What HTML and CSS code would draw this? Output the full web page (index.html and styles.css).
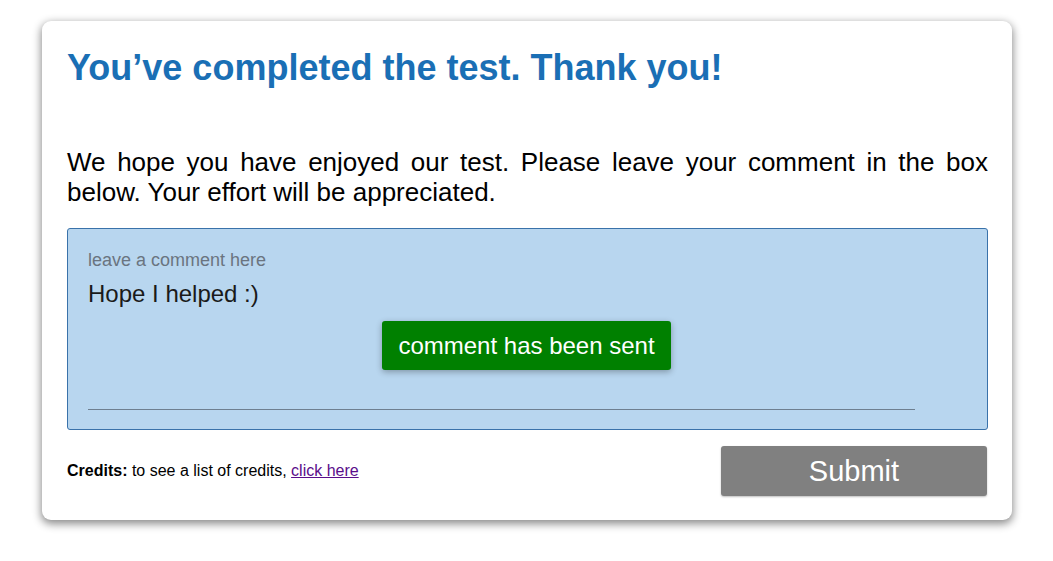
FILE: index.html
```html
<!DOCTYPE html>
<html>
<head>
<meta charset="utf-8">
<link rel="stylesheet" href="styles.css">
</head>
<body>
<div class="page">
  <div class="card">
    <h1 class="title">You’ve completed the test. Thank you!</h1>
    <p class="intro">We hope you have enjoyed our test. Please leave your comment in the box below. Your effort will be appreciated.</p>
    <div class="comment-box">
      <div class="label">leave a comment here</div>
      <div class="comment-text">Hope I helped :)</div>
      <div class="sent-row"><span class="sent">comment has been sent</span></div>
      <div class="rule"></div>
    </div>
    <div class="footer">
      <div class="credits"><b>Credits:</b> to see a list of credits, <a href="#" class="link">click here</a></div>
      <button class="submit">Submit</button>
    </div>
  </div>
</div>
</body>
</html>
```
FILE: styles.css
```css
html, body {
  margin: 0;
  padding: 0;
  background: #fff;
  font-family: "Liberation Sans", Arial, sans-serif;
}
.page {
  padding: 21px 41px 30px 42px;
}
.card {
  width: 970px;
  height: 499px;
  box-sizing: border-box;
  background: #fff;
  border-radius: 9px;
  box-shadow: 0 3px 8px 1px rgba(0,0,0,0.45);
  padding: 24px 24px 0 25px;
  display: flex;
  flex-direction: column;
}
.title {
  margin: 0;
  color: #1a6fb5;
  font-size: 36px;
  font-weight: bold;
  line-height: 46px;
}
.intro {
  margin: 56px 0 0 0;
  font-size: 26px;
  line-height: 30px;
  text-align: justify;
  color: #000;
}
.comment-box {
  margin-top: 21px;
  height: 202px;
  box-sizing: border-box;
  background: #b8d6ef;
  border: 1px solid #3a72aa;
  border-radius: 3px;
  padding: 20px 72px 0 20px;
  display: flex;
  flex-direction: column;
}
.label {
  color: #6a7480;
  font-size: 18px;
  line-height: 22px;
}
.comment-text {
  margin-top: 10px;
  color: #1a1a1a;
  font-size: 24px;
  line-height: 26px;
}
.sent-row {
  margin-top: 14px;
  display: flex;
  justify-content: center;
  padding-left: 50px;
}
.sent {
  background: #008000;
  color: #fff;
  font-size: 24px;
  line-height: 49px;
  padding: 0 16px;
  border-radius: 3px;
  box-shadow: 0 2px 6px rgba(0,0,0,0.3);
}
.rule {
  margin-top: 39px;
  height: 1px;
  background: #6e7f90;
}
.footer {
  margin-top: 16px;
  display: flex;
  justify-content: space-between;
  align-items: center;
}
.credits {
  font-size: 16px;
  color: #000;
}
.link {
  color: #5a0d8a;
  text-decoration: underline;
}
.submit {
  width: 266px;
  height: 50px;
  border: none;
  border-radius: 3px;
  background: #808080;
  color: #fff;
  font-family: "Liberation Sans", Arial, sans-serif;
  font-size: 29px;
  box-shadow: 0 1px 2px rgba(0,0,0,0.25);
  margin-right: 1px;
}
```
